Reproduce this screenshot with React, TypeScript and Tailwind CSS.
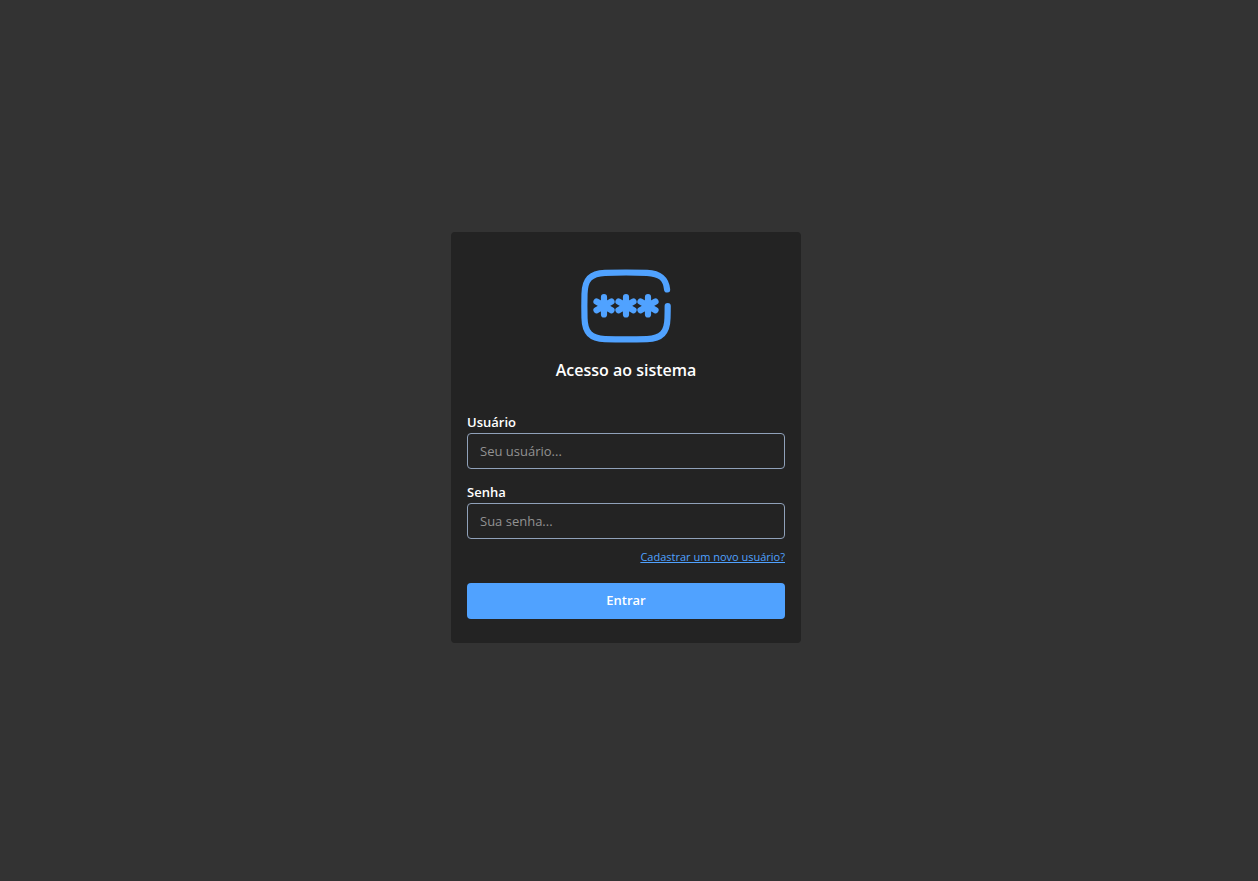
import type { FormEvent } from "react";

const asterisks = [34, 56, 78];

function PasswordIcon() {
  return (
    <svg
      viewBox="0 0 112 92"
      className="h-[92px] w-28"
      fill="none"
      stroke="#50a2ff"
      strokeWidth="6.2"
      strokeLinecap="round"
      strokeLinejoin="round"
      aria-hidden="true"
    >
      <path d="M97.1 29.5C96 18.4 90 13.4 77 12.8C63 12.4 49 12.4 35 12.8C20.5 13.4 14.8 19.5 14.5 34C14.3 42 14.3 50 14.5 58C14.8 72.5 20.5 78.5 35 79.1C49 79.5 63 79.5 77 79.1C91.5 78.5 97.2 72.5 97.5 58Q97.7 52 97.7 46" />
      {asterisks.map((x) => (
        <path key={x} d={`M${x} 37.2V54.4M${x - 7.5} 41.5L${x + 7.5} 50.2M${x + 7.5} 41.5L${x - 7.5} 50.2`} />
      ))}
    </svg>
  );
}

interface FieldProps {
  id: string;
  label: string;
  type: string;
  placeholder: string;
}

function Field({ id, label, type, placeholder }: FieldProps) {
  return (
    <div className="flex flex-col gap-px">
      <label htmlFor={id} className="text-[13px] leading-5 font-semibold">
        {label}
      </label>
      <input
        id={id}
        type={type}
        placeholder={placeholder}
        className="h-9 w-full rounded-sm border border-[#90a1b9] bg-transparent px-3 text-[13px] placeholder:text-[#929292] outline-none focus:border-[#50a2ff]"
      />
    </div>
  );
}

export default function App() {
  const submit = (event: FormEvent) => event.preventDefault();

  return (
    <main className="flex min-h-screen items-center justify-center bg-[#333333] pr-1.5 pb-1.5 font-['Open_Sans','Noto_Sans',sans-serif] text-white">
      <form onSubmit={submit} className="flex w-full max-w-[350px] flex-col rounded-sm bg-[#232323] px-4 pt-7 pb-6">
        <header className="flex flex-col items-center gap-1">
          <PasswordIcon />
          <h1 className="text-base leading-7 font-semibold">Acesso ao sistema</h1>
        </header>
        <div className="mt-7 flex flex-col gap-[13px]">
          <Field id="usuario" label="Usuário" type="text" placeholder="Seu usuário..." />
          <Field id="senha" label="Senha" type="password" placeholder="Sua senha..." />
        </div>
        <a href="#cadastro" className="mt-2.5 self-end text-[11px] leading-4 text-[#50a2ff] underline">
          Cadastrar um novo usuário?
        </a>
        <button type="submit" className="mt-[18px] h-9 rounded-sm bg-[#50a2ff] text-[13px] font-semibold">
          Entrar
        </button>
      </form>
    </main>
  );
}
